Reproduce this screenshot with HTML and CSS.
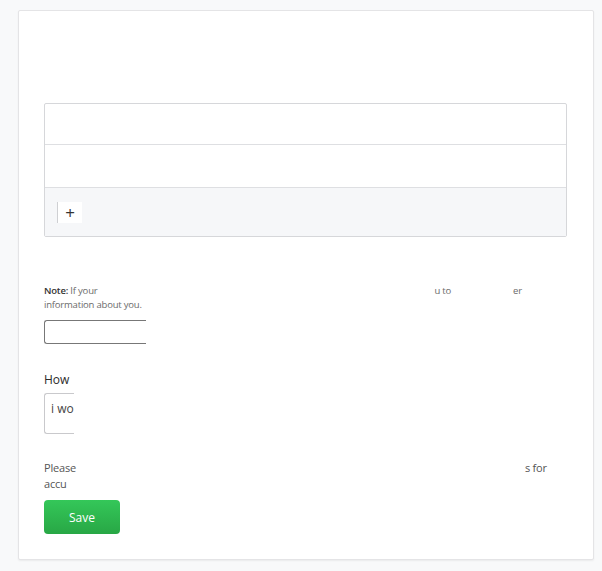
FILE: index.html
```html
<!DOCTYPE html>
<html>
<head>
<meta charset="utf-8">
<link rel="stylesheet" href="styles.css">
</head>
<body>
<div class="card">
  <div class="card-head"></div>
  <div class="items">
    <div class="row"></div>
    <div class="row"></div>
    <div class="row row-foot">
      <div class="stepper"><span class="step-btn">+</span></div>
    </div>
  </div>

  <p class="note"><b>Note:</b> If your<span class="frag f1">u to</span><span class="frag f2">er</span><br>information about you.</p>
  <div class="field short"></div>

  <label class="label">How</label>
  <div class="textarea">i wo</div>

  <p class="please">Please<span class="frag f3">s for</span><br>accu</p>
  <button class="btn">Save</button>
</div>
</body>
</html>
```

FILE: styles.css
```css
html, body {
  margin: 0;
  padding: 0;
}
body {
  background: #f8f9fa;
  font-family: "Open Sans", "Noto Sans", sans-serif;
  padding: 10px 8px 11px 18px;
}
.card {
  width: 576px;
  box-sizing: border-box;
  height: 550px;
  background: #fff;
  border: 1px solid #e4e4e6;
  border-radius: 2px;
  box-shadow: 0 1px 2px rgba(0,0,0,0.06);
  padding: 0 26px 0 25px;
}
.card-head {
  height: 92px;
}
.items {
  border: 1px solid #d6d7da;
  border-radius: 2px;
  width: 523px;
  box-sizing: border-box;
}
.row {
  height: 40px;
  border-bottom: 1px solid #dedfe2;
}
.row + .row {
  height: 42px;
}
.row.row-foot {
  height: 48px;
  border-bottom: none;
  background: #f6f7f9;
  display: flex;
  align-items: center;
  padding-left: 12px;
}
.stepper {
  display: flex;
  height: 21px;
  border-left: 1px solid #cfd0d3;
  background: #fff;
}
.step-btn {
  width: 24px;
  display: flex;
  align-items: center;
  justify-content: center;
  font-size: 17px;
  color: #333;
  line-height: 1;
}
.note {
  margin: 47px 0 0;
  font-size: 9.5px;
  line-height: 14px;
  color: #6b6b6b;
  letter-spacing: -0.2px;
}
.note b {
  color: #333;
  font-weight: 600;
}
.frag {
  display: inline-block;
}
.f1 { margin-left: 337px; }
.f2 { margin-left: 62px; }
.f3 { margin-left: 449px; }
.field {
  margin-top: 8px;
  height: 24px;
  width: 102px;
  box-sizing: border-box;
  border: 1px solid #777;
  border-right: none;
  border-radius: 3px 0 0 3px;
}
.label {
  display: block;
  margin-top: 27px;
  font-size: 12px;
  line-height: 18px;
  color: #2b2b2b;
}
.textarea {
  margin-top: 4px;
  height: 41px;
  width: 30px;
  box-sizing: border-box;
  border: 1px solid #c9c9cc;
  border-right: none;
  border-radius: 3px 0 0 3px;
  padding: 6px 0 0 6px;
  font-size: 12px;
  color: #444;
  white-space: nowrap;
}
.please {
  margin: 26px 0 0;
  font-size: 11px;
  line-height: 16px;
  color: #555;
  letter-spacing: -0.2px;
}
.btn {
  display: block;
  margin-top: 8px;
  width: 76px;
  height: 34px;
  border: none;
  border-radius: 4px;
  background: linear-gradient(#34c759, #28a745);
  color: #fff;
  font-family: inherit;
  font-size: 12px;
}
```
